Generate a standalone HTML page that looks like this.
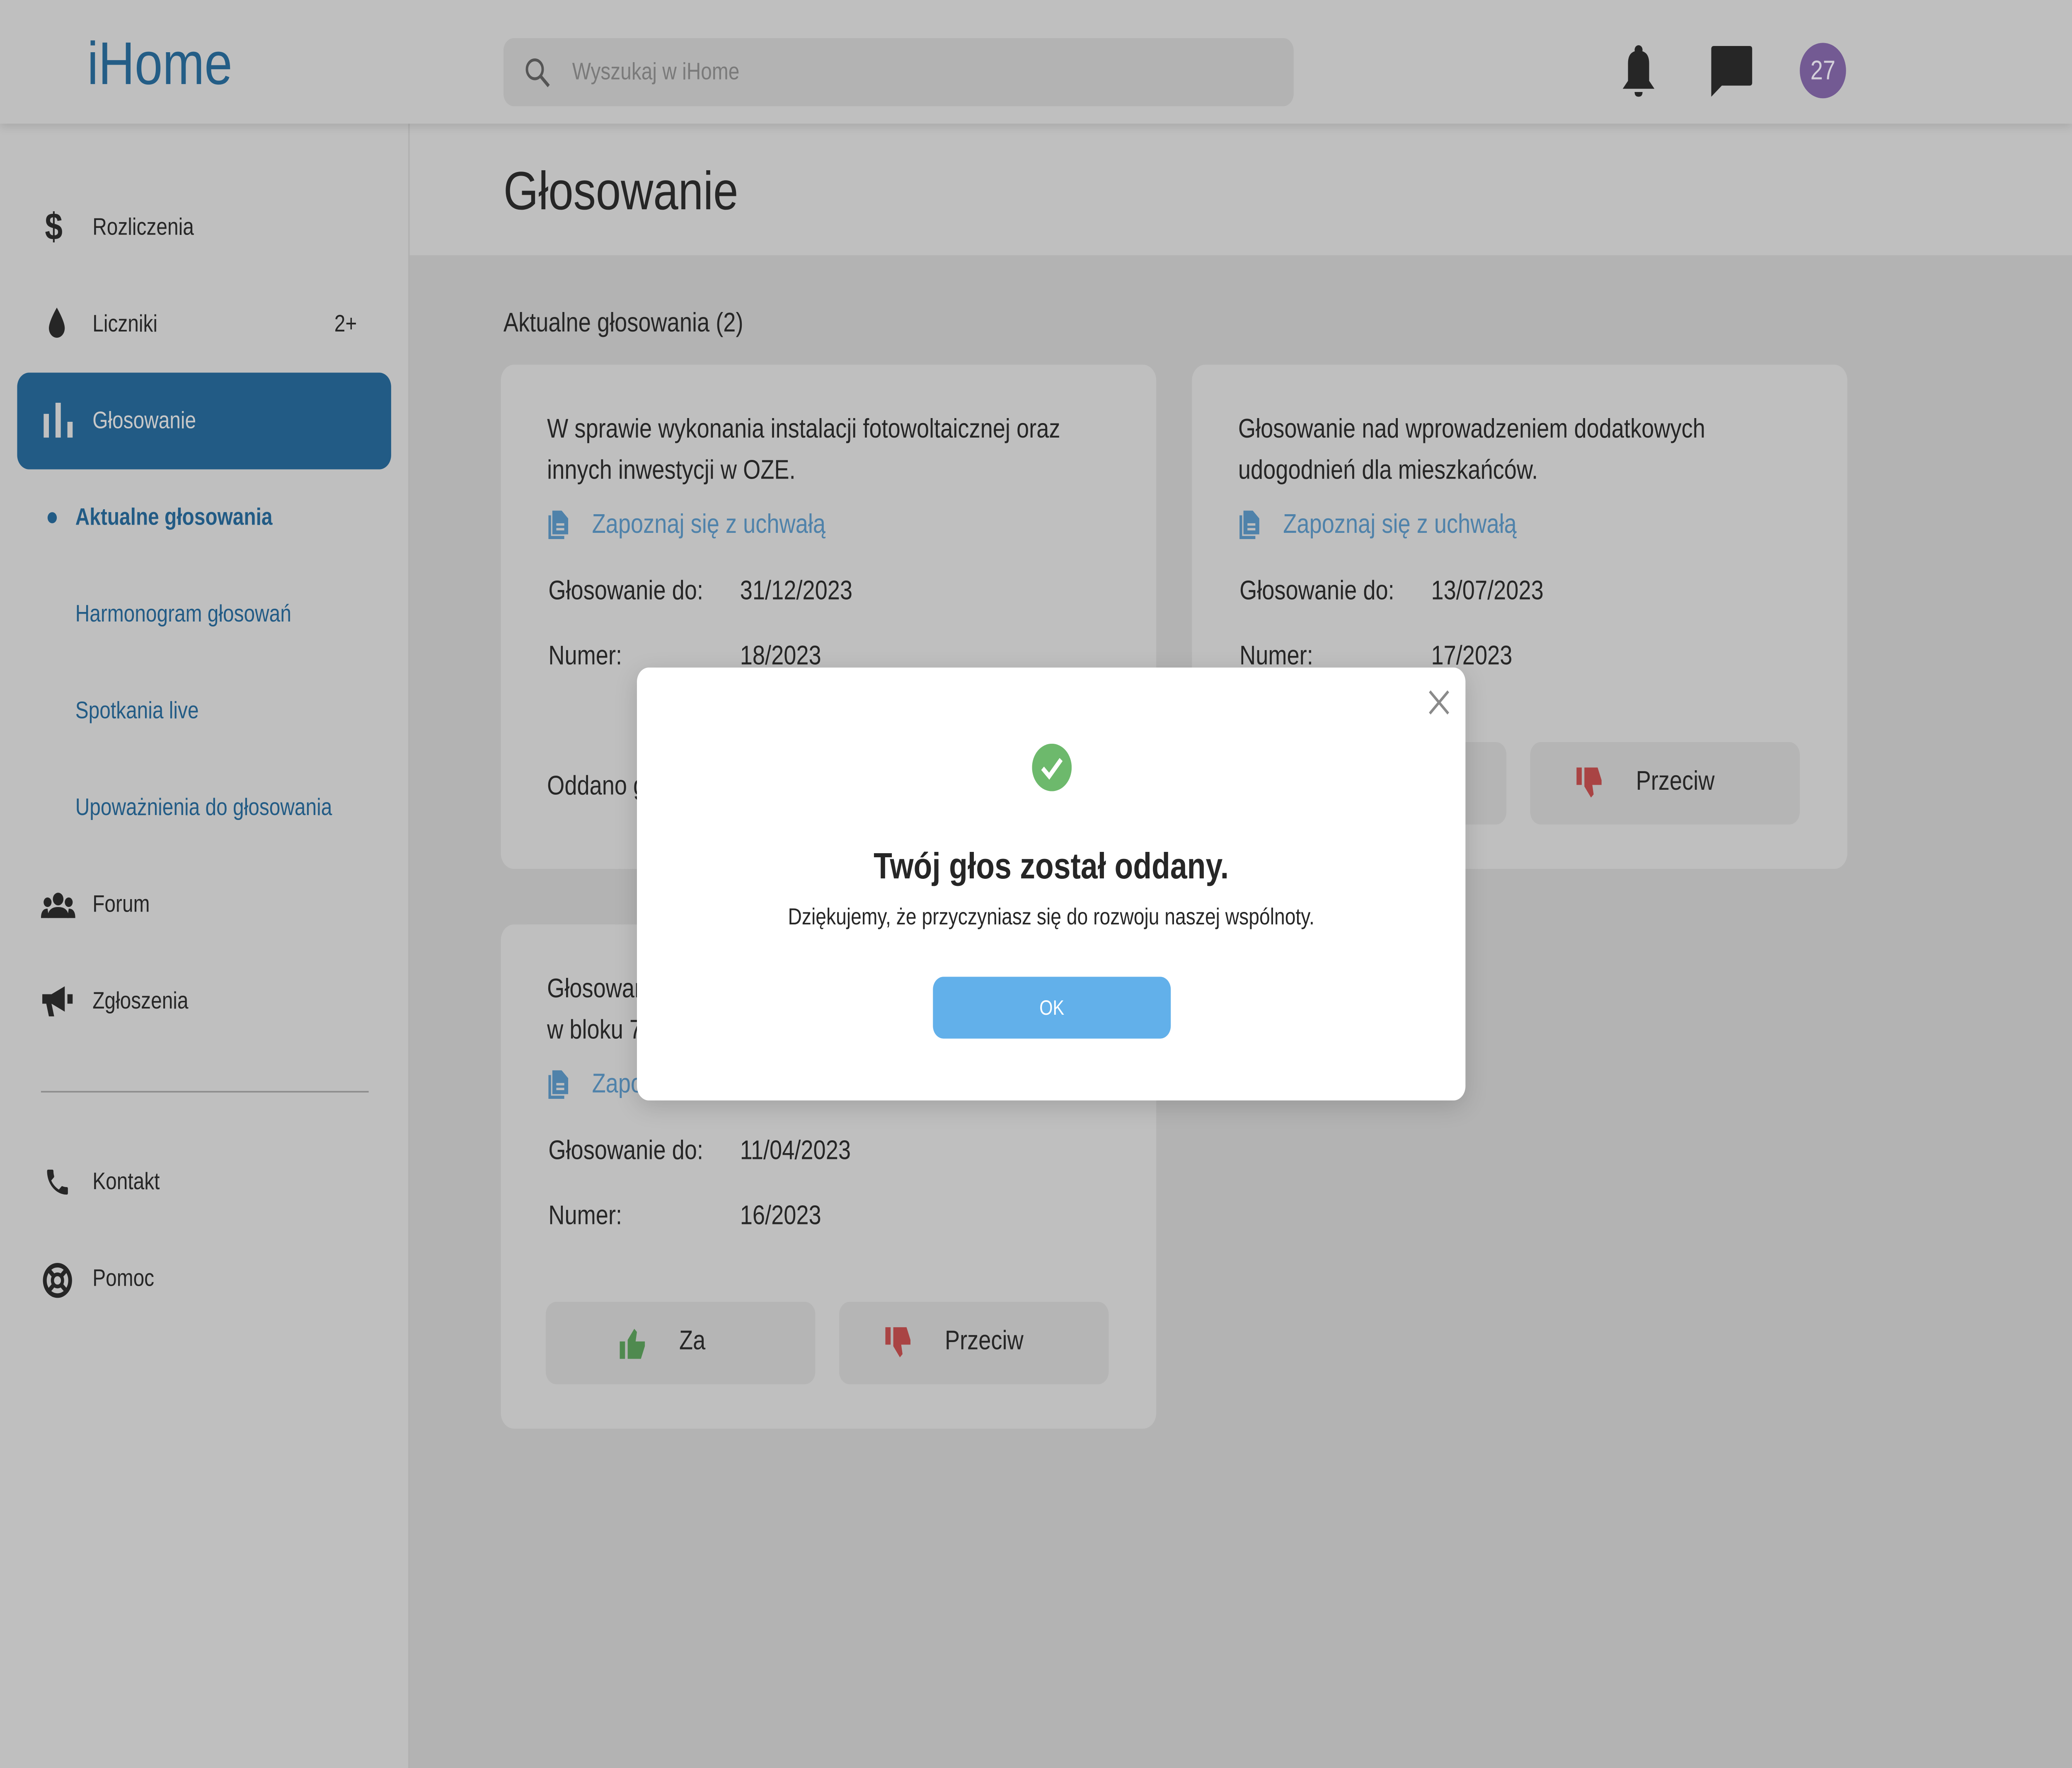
<!DOCTYPE html>
<html><head><meta charset="utf-8"><style>
html,body{margin:0;padding:0;width:100%;height:100%;overflow:hidden;background:#b3b3b3;}
#s{position:fixed;left:0;top:0;width:100vw;height:100vh;display:block}
#r{position:relative;width:1568px;height:1115px;font-family:"Liberation Sans",sans-serif;color:#262626;background:#b3b3b3;overflow:hidden}
.a{position:absolute}
.nav{position:absolute;font-size:15px;}
.card{position:absolute;background:#bfbfbf;border-radius:10px;}
.t{font-size:17px;line-height:26px;}
.lbl{position:absolute;font-size:17px;}
.link{position:absolute;font-size:17px;color:#4f82aa;}
.btn{position:absolute;background:#b5b5b5;border-radius:8px;width:204px;height:52px;font-size:17px;}
</style></head><body>
<svg id="s" viewBox="0 0 1568 1115" preserveAspectRatio="none"><foreignObject x="0" y="0" width="1568" height="1115"><div xmlns="http://www.w3.org/1999/xhtml" id="r">
<div class="a" style="left:0;top:0;width:1568px;height:78px;background:#bfbfbf;box-shadow:0 2px 6px rgba(0,0,0,.12);z-index:2"></div>
<div class="a" style="left:66px;top:20px;font-size:38px;color:#235d86;z-index:3">iHome</div>
<div class="a" style="left:381px;top:24px;width:598px;height:43px;background:#b3b3b3;border-radius:8px;z-index:3"></div>
<svg class="a" style="left:396px;top:35px;z-index:3" width="22" height="22" viewBox="0 0 24 24"><circle cx="9.5" cy="9.5" r="6.5" fill="none" stroke="#555" stroke-width="2"/><path d="M14.5 14.5L21 21" stroke="#555" stroke-width="2.4"/></svg>
<div class="a" style="left:433px;top:37px;font-size:15px;color:#7a7a7a;z-index:3">Wyszukaj w iHome</div>
<svg class="a" style="left:1226px;top:28px;z-index:3" width="28" height="34" viewBox="0 0 28 34"><circle cx="14" cy="3.5" r="3" fill="#262626"/><path d="M6 12Q6 4 14 4Q22 4 22 12V23L26 28H2L6 23Z" fill="#262626"/><path d="M11 30H17Q17 33 14 33Q11 33 11 30Z" fill="#262626"/></svg>
<svg class="a" style="left:1295px;top:29px;z-index:3" width="31" height="32" viewBox="0 0 31 32"><path d="M2 0H29Q31 0 31 2V23Q31 25 29 25H8L0 32V2Q0 0 2 0Z" fill="#262626"/></svg>
<div class="a" style="left:1362px;top:27px;width:35px;height:35px;border-radius:50%;background:#735a93;color:#d4d0da;font-size:17px;text-align:center;line-height:35px;z-index:3">27</div>
<div class="a" style="left:0;top:78px;width:309px;height:1037px;background:#bfbfbf;border-right:1px solid #b0b0b0"></div>
<div class="a" style="left:34px;top:130px;font-size:24px;font-weight:bold">$</div>
<div class="nav" style="left:70px;top:135px">Rozliczenia</div>
<svg class="a" style="left:35px;top:194px" width="16" height="20" viewBox="0 0 16 20"><path d="M8 0Q14 9 14 13A6 6 0 0 1 2 13Q2 9 8 0Z" fill="#262626"/></svg>
<div class="nav" style="left:70px;top:196px">Liczniki</div>
<div class="nav" style="left:253px;top:196px">2+</div>
<div class="a" style="left:13px;top:235px;width:283px;height:61px;background:#225b85;border-radius:9px"></div>
<svg class="a" style="left:33px;top:254px" width="22" height="22" viewBox="0 0 22 22"><rect x="0" y="7" width="4" height="15" fill="#c0c0c0"/><rect x="9" y="0" width="4" height="22" fill="#c0c0c0"/><rect x="18" y="12" width="4" height="10" fill="#c0c0c0"/></svg>
<div class="nav" style="left:70px;top:257px;color:#c8c8c8">Głosowanie</div>
<div class="a" style="left:36px;top:323px;width:7px;height:7px;border-radius:50%;background:#225b85"></div>
<div class="nav" style="left:57px;top:318px;color:#225b85;font-weight:bold">Aktualne głosowania</div>
<div class="nav" style="left:57px;top:379px;color:#225b85">Harmonogram głosowań</div>
<div class="nav" style="left:57px;top:440px;color:#225b85">Spotkania live</div>
<div class="nav" style="left:57px;top:501px;color:#225b85">Upoważnienia do głosowania</div>
<svg class="a" style="left:31px;top:563px" width="26" height="16" viewBox="0 0 26 16"><circle cx="13" cy="4" r="4" fill="#262626"/><circle cx="5" cy="6" r="3" fill="#262626"/><circle cx="21" cy="6" r="3" fill="#262626"/><path d="M5 16Q5 9 13 9Q21 9 21 16Z" fill="#262626"/><path d="M0 16Q0 10 5 10L6 16ZM26 16Q26 10 21 10L20 16Z" fill="#262626"/></svg>
<div class="nav" style="left:70px;top:562px">Forum</div>
<svg class="a" style="left:32px;top:622px" width="23" height="20" viewBox="0 0 23 20"><path d="M0 5H7L17 0V16L7 11H0Z M3 11H7L9 19H5Z M19 5H23V11H19Z" fill="#262626"/></svg>
<div class="nav" style="left:70px;top:623px">Zgłoszenia</div>
<div class="a" style="left:31px;top:688px;width:248px;height:1px;background:#8e8e8e"></div>
<svg class="a" style="left:33px;top:735px" width="21" height="21" viewBox="0 0 24 24"><path d="M6.6 10.8c1.4 2.8 3.8 5.1 6.6 6.6l2.2-2.2c.3-.3.7-.4 1-.2 1.1.4 2.3.6 3.6.6.6 0 1 .4 1 1V20c0 .6-.4 1-1 1C10.6 21 3 13.4 3 4c0-.6.4-1 1-1h3.5c.6 0 1 .4 1 1 0 1.3.2 2.5.6 3.6.1.3 0 .7-.2 1z" fill="#262626"/></svg>
<div class="nav" style="left:70px;top:737px">Kontakt</div>
<svg class="a" style="left:32px;top:796px" width="23" height="23" viewBox="0 0 24 24"><circle cx="12" cy="12" r="10" fill="none" stroke="#262626" stroke-width="3"/><circle cx="12" cy="12" r="4" fill="none" stroke="#262626" stroke-width="2.5"/><path d="M5 5L9 9M19 5L15 9M5 19L9 15M19 19L15 15" stroke="#262626" stroke-width="3"/></svg>
<div class="nav" style="left:70px;top:798px">Pomoc</div>
<div class="a" style="left:310px;top:78px;width:1258px;height:83px;background:#bfbfbf"></div>
<div class="a" style="left:381px;top:102px;font-size:34px">Głosowanie</div>
<div class="a" style="left:381px;top:194px;font-size:17px">Aktualne głosowania (2)</div>
<div class="card" style="left:379px;top:230px;width:496px;height:318px"></div>
<div class="a t" style="left:414px;top:258px;width:430px">W sprawie wykonania instalacji fotowoltaicznej oraz innych inwestycji w OZE.</div>
<svg class="a" style="left:415px;top:322px" width="15" height="18" viewBox="0 0 15 18"><path d="M3 0H10L15 5V15H3Z M0 3V18H12V16H2V3Z" fill="#4f82aa"/><rect x="6" y="8" width="6" height="1.5" fill="#bfbfbf"/><rect x="6" y="11" width="6" height="1.5" fill="#bfbfbf"/></svg>
<div class="link" style="left:448px;top:321px">Zapoznaj się z uchwałą</div>
<div class="lbl" style="left:415px;top:363px">Głosowanie do:</div><div class="lbl" style="left:560px;top:363px">31/12/2023</div>
<div class="lbl" style="left:415px;top:404px">Numer:</div><div class="lbl" style="left:560px;top:404px">18/2023</div>
<div class="lbl" style="left:414px;top:486px">Oddano głos</div>
<div class="card" style="left:902px;top:230px;width:496px;height:318px"></div>
<div class="a t" style="left:937px;top:258px;width:430px">Głosowanie nad wprowadzeniem dodatkowych udogodnień dla mieszkańców.</div>
<svg class="a" style="left:938px;top:322px" width="15" height="18" viewBox="0 0 15 18"><path d="M3 0H10L15 5V15H3Z M0 3V18H12V16H2V3Z" fill="#4f82aa"/><rect x="6" y="8" width="6" height="1.5" fill="#bfbfbf"/><rect x="6" y="11" width="6" height="1.5" fill="#bfbfbf"/></svg>
<div class="link" style="left:971px;top:321px">Zapoznaj się z uchwałą</div>
<div class="lbl" style="left:938px;top:363px">Głosowanie do:</div><div class="lbl" style="left:1083px;top:363px">13/07/2023</div>
<div class="lbl" style="left:938px;top:404px">Numer:</div><div class="lbl" style="left:1083px;top:404px">17/2023</div>
<div class="btn" style="left:936px;top:468px"></div>
<div class="btn" style="left:1158px;top:468px"></div>
<svg class="a" style="left:1193px;top:484px" width="20" height="19" viewBox="0 0 20 19"><path d="M0 0H4V11H0Z M6 0H16L19 8V11H12L13 17L11 19L6 12Z" fill="#a94444"/></svg>
<div class="lbl" style="left:1238px;top:483px">Przeciw</div>
<div class="card" style="left:379px;top:583px;width:496px;height:318px"></div>
<div class="a t" style="left:414px;top:611px;width:430px">Głosowanie nad remontem<br/>w bloku 7</div>
<svg class="a" style="left:415px;top:675px" width="15" height="18" viewBox="0 0 15 18"><path d="M3 0H10L15 5V15H3Z M0 3V18H12V16H2V3Z" fill="#4f82aa"/><rect x="6" y="8" width="6" height="1.5" fill="#bfbfbf"/><rect x="6" y="11" width="6" height="1.5" fill="#bfbfbf"/></svg>
<div class="link" style="left:448px;top:674px">Zapoznaj się z uchwałą</div>
<div class="lbl" style="left:415px;top:716px">Głosowanie do:</div><div class="lbl" style="left:560px;top:716px">11/04/2023</div>
<div class="lbl" style="left:415px;top:757px">Numer:</div><div class="lbl" style="left:560px;top:757px">16/2023</div>
<div class="btn" style="left:413px;top:821px"></div>
<svg class="a" style="left:469px;top:838px" width="20" height="19" viewBox="0 0 20 19"><path d="M0 8H4V19H0Z M6 19H16L19 11V8H12L13 2L11 0L6 7Z" fill="#4f8a4f"/></svg>
<div class="lbl" style="left:514px;top:836px">Za</div>
<div class="btn" style="left:635px;top:821px"></div>
<svg class="a" style="left:670px;top:837px" width="20" height="19" viewBox="0 0 20 19"><path d="M0 0H4V11H0Z M6 0H16L19 8V11H12L13 17L11 19L6 12Z" fill="#a94444"/></svg>
<div class="lbl" style="left:715px;top:836px">Przeciw</div>
<div class="a" style="left:482px;top:421px;width:627px;height:273px;background:#fff;border-radius:9px;box-shadow:0 4px 16px rgba(0,0,0,.15)"></div>
<svg class="a" style="left:1080px;top:434px" width="18" height="18" viewBox="0 0 18 18"><path d="M2 2L16 16M16 2L2 16" stroke="#8a8a8a" stroke-width="1.8"/></svg>
<svg class="a" style="left:781px;top:469px" width="30" height="30" viewBox="0 0 30 30"><circle cx="15" cy="15" r="15" fill="#6db96c"/><path d="M8 15.5L13 20.5L22 10" fill="none" stroke="#fff" stroke-width="3"/></svg>
<div class="a" style="left:482px;width:627px;top:533px;text-align:center;font-size:23px;font-weight:bold">Twój głos został oddany.</div>
<div class="a" style="left:482px;width:627px;top:571px;text-align:center;font-size:14.5px">Dziękujemy, że przyczyniasz się do rozwoju naszej wspólnoty.</div>
<div class="a" style="left:706px;top:616px;width:180px;height:39px;border-radius:8px;background:#62b0ea;color:#fff;font-size:13px;text-align:center;line-height:39px">OK</div>
</div></foreignObject></svg>
</body></html>
